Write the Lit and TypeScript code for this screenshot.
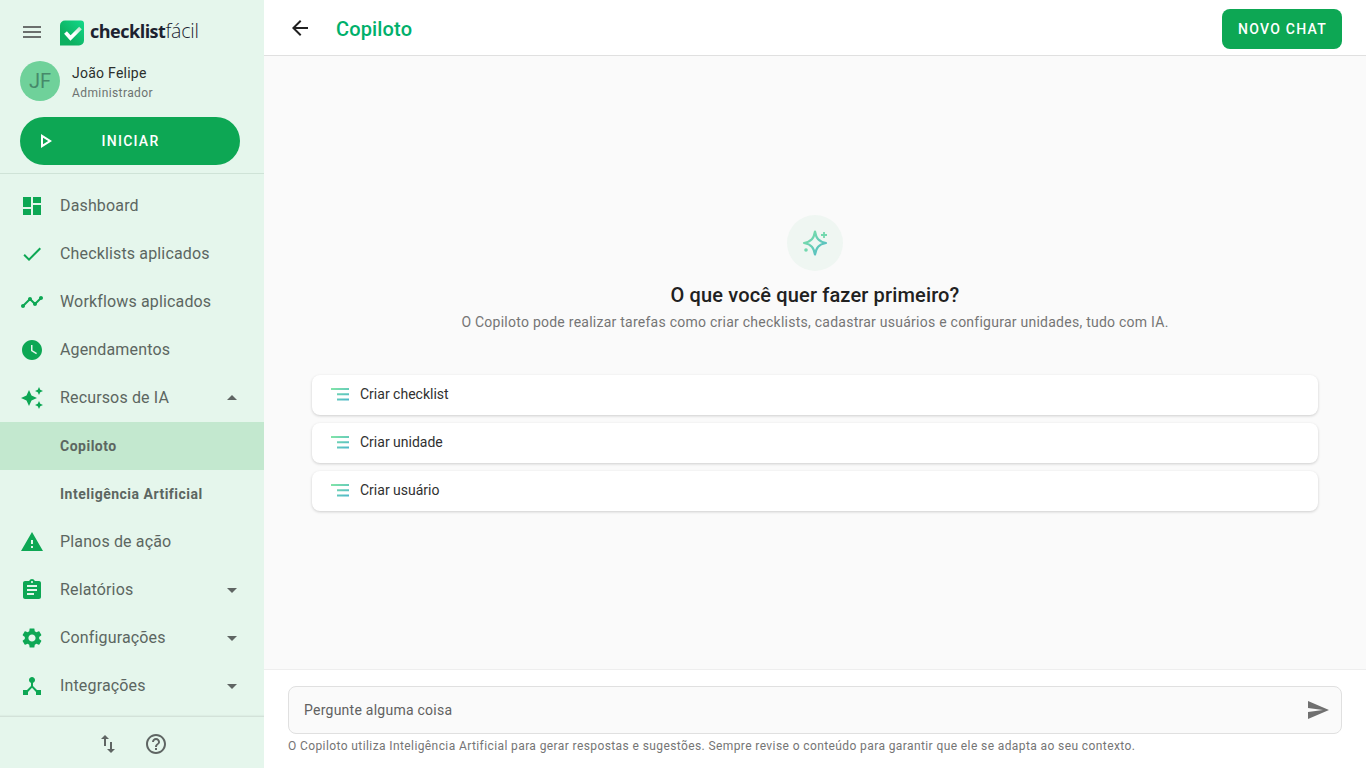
import { LitElement, html, css, svg } from "lit";
import { customElement } from "lit/decorators.js";

const ICONS: Record<string, string> = {
  menu: "M3 18h18v-2H3v2zm0-5h18v-2H3v2zm0-7v2h18V6H3z",
  dashboard: "M3 13h8V3H3v10zm0 8h8v-6H3v6zm10 0h8V11h-8v10zm0-18v6h8V3h-8z",
  check: "M9 16.17L4.83 12l-1.42 1.41L9 19 21 7l-1.41-1.41z",
  timeline:
    "M23 8c0 1.1-.9 2-2 2-.18 0-.35-.02-.51-.07l-3.56 3.55c.05.16.07.34.07.52 0 1.1-.9 2-2 2s-2-.9-2-2c0-.18.02-.36.07-.52l-2.55-2.55c-.16.05-.34.07-.52.07s-.36-.02-.52-.07l-4.55 4.56c.05.16.07.33.07.51 0 1.1-.9 2-2 2s-2-.9-2-2 .9-2 2-2c.18 0 .35.02.51.07l4.56-4.55C8.02 9.36 8 9.18 8 9c0-1.1.9-2 2-2s2 .9 2 2c0 .18-.02.36-.07.52l2.55 2.55c.16-.05.34-.07.52-.07s.36.02.52.07l3.55-3.56C19.02 8.35 19 8.18 19 8c0-1.1.9-2 2-2s2 .9 2 2z",
  clock:
    "M12 2C6.5 2 2 6.5 2 12s4.5 10 10 10 10-4.5 10-10S17.5 2 12 2zm4.2 14.2L11 13V7h1.5v5.2l4.5 2.7-.8 1.3z",
  sparkle:
    "M19 9l1.25-2.75L23 5l-2.75-1.25L19 1l-1.25 2.75L15 5l2.75 1.25L19 9zm-7.5.5L9 4 6.5 9.5 1 12l5.5 2.5L9 20l2.5-5.5L17 12l-5.5-2.5zM19 15l-1.25 2.75L15 19l2.75 1.25L19 23l1.25-2.75L23 19l-2.75-1.25L19 15z",
  warning: "M1 21h22L12 2 1 21zm12-3h-2v-2h2v2zm0-4h-2v-4h2v4z",
  assignment:
    "M19 3h-4.18C14.4 1.84 13.3 1 12 1c-1.3 0-2.4.84-2.82 2H5c-1.1 0-2 .9-2 2v14c0 1.1.9 2 2 2h14c1.1 0 2-.9 2-2V5c0-1.1-.9-2-2-2zm-7 0c.55 0 1 .45 1 1s-.45 1-1 1-1-.45-1-1 .45-1 1-1zm2 14H7v-2h7v2zm3-4H7v-2h10v2zm0-4H7V7h10v2z",
  settings:
    "M19.14 12.94c.04-.3.06-.61.06-.94 0-.32-.02-.64-.07-.94l2.03-1.58c.18-.14.23-.41.12-.61l-1.92-3.32c-.12-.22-.37-.29-.59-.22l-2.39.96c-.5-.38-1.03-.7-1.62-.94l-.36-2.54c-.04-.24-.24-.41-.48-.41h-3.84c-.24 0-.43.17-.47.41l-.36 2.54c-.59.24-1.13.57-1.62.94l-2.39-.96c-.22-.08-.47 0-.59.22L2.74 8.87c-.12.21-.08.47.12.61l2.03 1.58c-.05.3-.09.63-.09.94s.02.64.07.94l-2.03 1.58c-.18.14-.23.41-.12.61l1.92 3.32c.12.22.37.29.59.22l2.39-.96c.5.38 1.03.7 1.62.94l.36 2.54c.05.24.24.41.48.41h3.84c.24 0 .44-.17.47-.41l.36-2.54c.59-.24 1.13-.56 1.62-.94l2.39.96c.22.08.47 0 .59-.22l1.92-3.32c.12-.22.07-.47-.12-.61l-2.01-1.58zM12 15.6c-1.98 0-3.6-1.62-3.6-3.6s1.62-3.6 3.6-3.6 3.6 1.62 3.6 3.6-1.62 3.6-3.6 3.6z",
  hub: "M17 16l-4-4V8.82C14.16 8.4 15 7.3 15 6c0-1.66-1.34-3-3-3S9 4.34 9 6c0 1.3.84 2.4 2 2.82V12l-4 4H3v5h5v-3.05l4-4.2 4 4.2V21h5v-5h-4z",
  swap: "M16 17.01V10h-2v7.01h-3L15 21l4-3.99h-3zM9 3L5 6.99h3V14h2V6.99h3L9 3z",
  help: "M11 18h2v-2h-2v2zm1-16C6.48 2 2 6.48 2 12s4.48 10 10 10 10-4.48 10-10S17.52 2 12 2zm0 18c-4.41 0-8-3.59-8-8s3.59-8 8-8 8 3.59 8 8-3.59 8-8 8zm0-14c-2.21 0-4 1.79-4 4h2c0-1.1.9-2 2-2s2 .9 2 2c0 2-3 1.75-3 5h2c0-2.25 3-2.5 3-5 0-2.21-1.79-4-4-4z",
  back: "M20 11H7.83l5.59-5.59L12 4l-8 8 8 8 1.41-1.41L7.83 13H20v-2z",
  send: "M2.01 21L23 12 2.01 3 2 10l15 2-15 2z",
  play: "M10 8.64L15.27 12 10 15.36V8.64M8 5v14l11-7L8 5z",
  down: "M7 10l5 5 5-5z",
  up: "M7 14l5-5 5 5z",
};

const icon = (name: string, cls = "") => html`<svg
  class="icon ${cls}"
  viewBox="0 0 24 24"
  fill="currentColor"
>
  ${svg`<path d=${ICONS[name]}></path>`}
</svg>`;

type NavItem = {
  label: string;
  icon?: string;
  caret?: "up" | "down";
  sub?: boolean;
  active?: boolean;
};

const NAV: NavItem[] = [
  { label: "Dashboard", icon: "dashboard" },
  { label: "Checklists aplicados", icon: "check" },
  { label: "Workflows aplicados", icon: "timeline" },
  { label: "Agendamentos", icon: "clock" },
  { label: "Recursos de IA", icon: "sparkle", caret: "up" },
  { label: "Copiloto", sub: true, active: true },
  { label: "Inteligência Artificial", sub: true },
  { label: "Planos de ação", icon: "warning" },
  { label: "Relatórios", icon: "assignment", caret: "down" },
  { label: "Configurações", icon: "settings", caret: "down" },
  { label: "Integrações", icon: "hub", caret: "down" },
];

const ACTIONS = ["Criar checklist", "Criar unidade", "Criar usuário"];

@customElement("app-root")
export class AppRoot extends LitElement {
  static styles = css`
    :host {
      display: flex;
      width: 100%;
      height: 100vh;
      overflow: hidden;
      font-family: Roboto, "Liberation Sans", sans-serif;
      color: #212121;
    }

    .icon {
      display: block;
      width: 24px;
      height: 24px;
      flex: none;
    }

    /* sidebar */
    .sidebar {
      width: 264px;
      flex: none;
      display: flex;
      flex-direction: column;
      background: #e5f6ec;
    }
    .brand {
      display: flex;
      align-items: center;
      height: 61px;
      padding: 4px 0 0 20px;
      box-sizing: border-box;
      gap: 16px;
      color: #6b6f6d;
    }
    .brand > .icon {
      margin-bottom: 2px;
    }
    .logo {
      display: flex;
      align-items: center;
      gap: 6px;
    }
    .logo svg {
      display: block;
    }
    .wordmark {
      font-family: "Open Sans", sans-serif;
      font-size: 18px;
      letter-spacing: -0.5px;
      color: #1c2230;
      font-weight: 700;
      line-height: 24px;
      margin-bottom: 3px;
    }
    .wordmark span {
      font-size: 19.5px;
      letter-spacing: -0.2px;
      font-weight: 300;
    }
    .profile {
      display: flex;
      align-items: center;
      gap: 12px;
      padding: 0 20px;
      height: 40px;
    }
    .avatar {
      width: 40px;
      height: 40px;
      border-radius: 50%;
      background: #6fd19a;
      color: #46896a;
      font-size: 20px;
      display: flex;
      align-items: center;
      justify-content: center;
    }
    .who {
      padding-top: 3px;
    }
    .name {
      font-size: 14px;
      line-height: 20px;
      letter-spacing: 0.25px;
      color: #2b2f2d;
    }
    .role {
      font-size: 12px;
      line-height: 18px;
      letter-spacing: 0.4px;
      margin-top: 1px;
      color: #6d7370;
    }
    .start {
      position: relative;
      margin: 16px 24px 8px 20px;
      height: 48px;
      padding-left: 1px;
      box-sizing: border-box;
      border-radius: 24px;
      background: #0da754;
      color: #fff;
      font-size: 14px;
      font-weight: 500;
      letter-spacing: 1.25px;
      display: flex;
      align-items: center;
      justify-content: center;
    }
    .start .icon {
      position: absolute;
      left: 13px;
      top: 12px;
    }
    .nav {
      flex: 1;
      padding-top: 8px;
      border-top: 1px solid #cfe3d7;
    }
    .item {
      display: flex;
      align-items: center;
      height: 48px;
      padding: 0 20px;
      color: #5c6661;
      font-size: 16px;
      letter-spacing: 0.15px;
    }
    .item .icon {
      color: #0da754;
      margin-right: 16px;
    }
    .item .label {
      flex: 1;
      margin-top: -2px;
    }
    .item .icon.caret {
      color: #5f6563;
      margin: 0;
    }
    .item.sub {
      padding-left: 60px;
      font-size: 14px;
      font-weight: 700;
      letter-spacing: 0.5px;
    }
    .item.sub .label {
      margin-top: 0;
    }
    .item.active {
      background: #c3e8cf;
    }
    .foot {
      height: 52px;
      flex: none;
      padding-top: 3px;
      box-sizing: border-box;
      display: flex;
      align-items: center;
      justify-content: center;
      gap: 24px;
      color: #5f6563;
      border-top: 1px solid #d3e2d9;
      box-shadow: 0 -1px 1px rgba(0, 0, 0, 0.03);
    }

    /* main column */
    .main {
      flex: 1;
      min-width: 0;
      display: flex;
      flex-direction: column;
      background: #fafafa;
    }
    .top {
      height: 56px;
      box-sizing: border-box;
      flex: none;
      display: flex;
      align-items: center;
      padding: 0 24px;
      background: #fff;
      border-bottom: 1px solid #e0e0e0;
    }
    .top .back {
      color: #212121;
    }
    .top h1 {
      flex: 1;
      margin: 2px 0 0 24px;
      font-size: 20px;
      line-height: 28px;
      font-weight: 500;
      letter-spacing: 0.15px;
      color: #00b06b;
    }
    .new-chat {
      width: 120px;
      height: 40px;
      padding-left: 1px;
      box-sizing: border-box;
      margin-top: 3px;
      border-radius: 8px;
      background: #0da754;
      color: #fff;
      font-size: 14px;
      font-weight: 500;
      letter-spacing: 1.25px;
      display: flex;
      align-items: center;
      justify-content: center;
    }
    .content {
      flex: 1;
      display: flex;
      flex-direction: column;
      justify-content: center;
      padding: 0 48px;
    }
    .hero {
      display: flex;
      flex-direction: column;
      align-items: center;
    }
    .spark {
      width: 56px;
      height: 56px;
      border-radius: 50%;
      background: #eff6f2;
      display: flex;
      align-items: center;
      justify-content: center;
    }
    .hero h2 {
      margin: 12px 0 0;
      font-size: 20px;
      line-height: 24px;
      font-weight: 500;
      letter-spacing: 0.15px;
      color: #212121;
    }
    .hero p {
      margin: 5px 0 0;
      font-size: 14px;
      line-height: 20px;
      letter-spacing: 0.25px;
      color: #757575;
    }
    .actions {
      display: flex;
      flex-direction: column;
      gap: 8px;
      margin-top: 43px;
    }
    .action {
      height: 40px;
      box-sizing: border-box;
      display: flex;
      align-items: center;
      gap: 10px;
      padding-left: 18px;
      background: #fff;
      border-radius: 8px;
      font-size: 14px;
      letter-spacing: 0;
      color: #303030;
      box-shadow: 0 1px 3px rgba(0, 0, 0, 0.18);
    }
    .action span {
      margin-top: -2px;
    }
    .composer {
      flex: none;
      height: 99px;
      box-sizing: border-box;
      padding: 16px 24px 0;
      background: #fff;
      border-top: 1px solid #eeeeee;
    }
    .field {
      height: 48px;
      box-sizing: border-box;
      display: flex;
      align-items: center;
      padding: 0 11px 0 15px;
      background: #fafafa;
      border: 1px solid #e0e0e0;
      border-radius: 8px;
      font-size: 14px;
      letter-spacing: 0.25px;
      color: #616161;
    }
    .field span {
      flex: 1;
    }
    .field .icon {
      color: #707070;
    }
    .note {
      margin: 4px 0 0;
      font-size: 12px;
      line-height: 16px;
      letter-spacing: 0.4px;
      color: #757575;
    }
  `;

  private renderNavItem(item: NavItem) {
    const cls = `item${item.sub ? " sub" : ""}${item.active ? " active" : ""}`;
    return html`<div class=${cls}>
      ${item.icon ? icon(item.icon) : ""}
      <span class="label">${item.label}</span>
      ${item.caret ? icon(item.caret, "caret") : ""}
    </div>`;
  }

  render() {
    return html`
      <aside class="sidebar">
        <div class="brand">
          ${icon("menu")}
          <div class="logo">
            <svg width="24" height="26" viewBox="0 0 24 26">
              <defs>
                <linearGradient id="lg" x1="0" y1="1" x2="1" y2="0">
                  <stop offset="0.3" stop-color="#0db060"></stop>
                  <stop offset="1" stop-color="#12d98a"></stop>
                </linearGradient>
                <linearGradient id="ck" x1="0" y1="1" x2="1" y2="0">
                  <stop offset="0.5" stop-color="#ffffff"></stop>
                  <stop offset="1" stop-color="#bfe8d0"></stop>
                </linearGradient>
              </defs>
              <path
                d="M5 .5h16a3 3 0 0 1 3 3v17a5 5 0 0 1-5 5H0V5.500a5 5 0 0 1 5-5z"
                fill="url(#lg)"
              ></path>
              <path
                d="M5.500 12.500l5 5.500L20.500 8"
                fill="none"
                stroke="url(#ck)"
                stroke-width="3.800"
              ></path>
            </svg>
            <div class="wordmark">checklist<span>fácil</span></div>
          </div>
        </div>
        <div class="profile">
          <div class="avatar">JF</div>
          <div class="who">
            <div class="name">João Felipe</div>
            <div class="role">Administrador</div>
          </div>
        </div>
        <div class="start">${icon("play")}INICIAR</div>
        <nav class="nav">${NAV.map((n) => this.renderNavItem(n))}</nav>
        <div class="foot">${icon("swap")} ${icon("help")}</div>
      </aside>
      <section class="main">
        <header class="top">
          ${icon("back", "back")}
          <h1>Copiloto</h1>
          <div class="new-chat">NOVO CHAT</div>
        </header>
        <div class="content">
          <div class="hero">
            <div class="spark">
              <svg width="32" height="32" viewBox="0 0 32 32" fill="none">
                <defs>
                  <linearGradient id="sg" x1="0" y1="0" x2="1" y2="1">
                    <stop offset="0" stop-color="#7fe3a4"></stop>
                    <stop offset="1" stop-color="#4fb8c8"></stop>
                  </linearGradient>
                </defs>
                <path
                  d="M16 4.500c1.200 7 3.500 10 11 11.500-7.500 1.500-9.800 4.500-11 11.500-1.200-7-3.500-10-11-11.500 7.500-1.500 9.800-4.500 11-11.500z"
                  stroke="url(#sg)"
                  stroke-width="2.200"
                  stroke-linejoin="round"
                ></path>
                <path
                  d="M25 5v6M22 8h6"
                  stroke="#72d8ae"
                  stroke-width="1.800"
                ></path>
                <circle cx="7" cy="23" r="1.800" fill="#72d8ae"></circle>
              </svg>
            </div>
            <h2>O que você quer fazer primeiro?</h2>
            <p>
              O Copiloto pode realizar tarefas como criar checklists, cadastrar
              usuários e configurar unidades, tudo com IA.
            </p>
          </div>
          <div class="actions">
            ${ACTIONS.map(
              (a) => html`<div class="action">
                <svg width="20" height="14" viewBox="0 0 20 14">
                  <defs>
                    <linearGradient id="ag" x1="0" y1="0" x2="1" y2="1">
                      <stop offset="0" stop-color="#84e6a6"></stop>
                      <stop offset="1" stop-color="#4db6cb"></stop>
                    </linearGradient>
                  </defs>
                  <path
                    d="M1 0h18v2H1zM7 5.300h12v2H7zM7 10.500h12v2H7z"
                    fill="url(#ag)"
                  ></path>
                </svg>
                <span>${a}</span>
              </div>`,
            )}
          </div>
        </div>
        <footer class="composer">
          <div class="field">
            <span>Pergunte alguma coisa</span>
            ${icon("send")}
          </div>
          <p class="note">
            O Copiloto utiliza Inteligência Artificial para gerar respostas e
            sugestões. Sempre revise o conteúdo para garantir que ele se adapta
            ao seu contexto.
          </p>
        </footer>
      </section>
    `;
  }
}
